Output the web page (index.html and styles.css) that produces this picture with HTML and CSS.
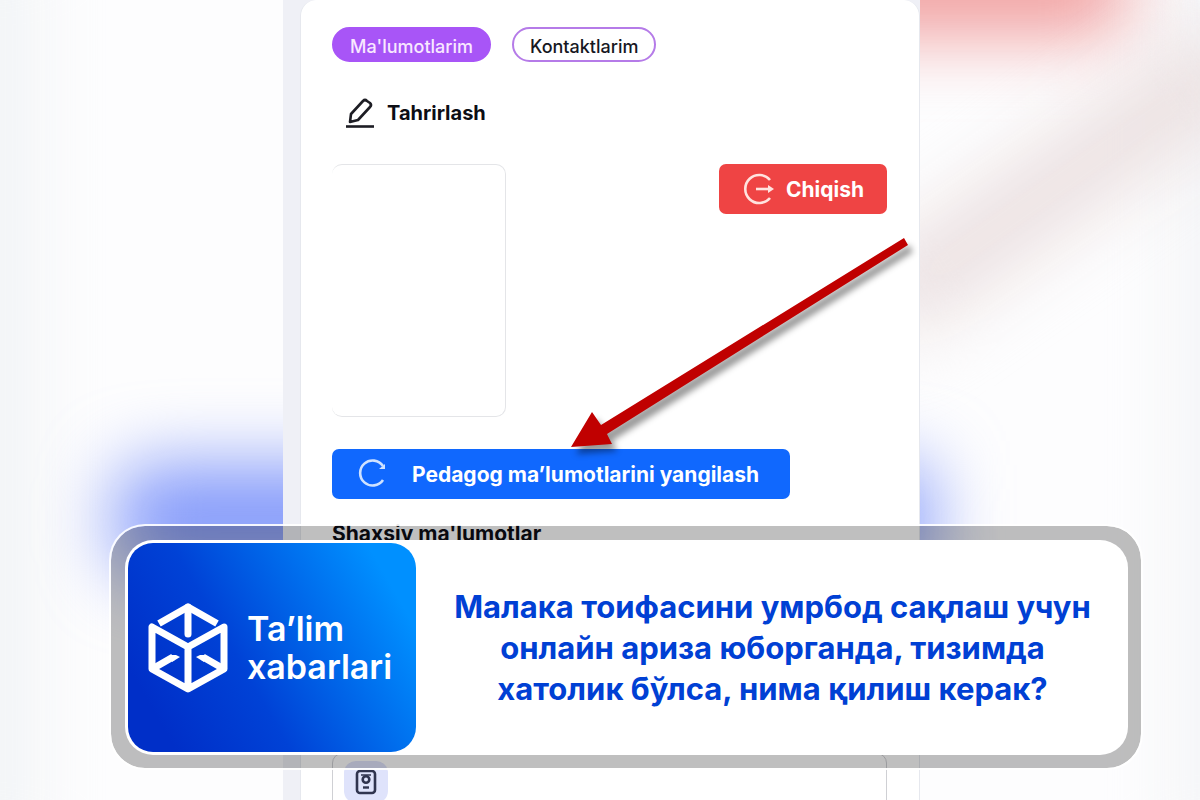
FILE: index.html
```html
<!DOCTYPE html>
<html lang="uz">
<head>
  <meta charset="UTF-8">
  <meta name="viewport" content="width=device-width, initial-scale=1.0">
  <title>Ta’lim xabarlari</title>
  <link rel="stylesheet" href="styles.css">
</head>
<body>
  <div class="page">
    <div class="backdrop">
      <div class="blob blob-edge"></div>
      <div class="blob blob-edge-right"></div>
      <div class="blob blob-blue"></div>
      <div class="blob blob-blue-right"></div>
      <div class="blob blob-red"></div>
      <div class="blob blob-streak"></div>
    </div>

    <main class="screen">
      <div class="profile">
        <div class="tabs">
          <button class="tab tab-active">Ma'lumotlarim</button>
          <button class="tab">Kontaktlarim</button>
        </div>

        <button class="edit-button">
          <svg width="30" height="32" viewBox="0 0 30 32" fill="none" stroke="#1d1d24" stroke-width="2.6" stroke-linejoin="round">
            <path d="M5 25l1-8L18 4q2-2 4 0l3 2q2 2 0 4L13 23z"/>
            <path d="M1 29.500h28"/>
          </svg>
          Tahrirlash
        </button>

        <div class="profile-row">
          <div class="photo"></div>
          <button class="button button-red">
            <svg width="32" height="32" viewBox="0 0 32 32" fill="none" stroke="#ffe3df" stroke-width="2.600">
              <path d="M28 7A14 14 0 1 0 28 25"/>
              <path d="M14 16h15"/>
              <path d="M26 12l6 4-6 4z" fill="#ffe3df" stroke="none"/>
            </svg>
            Chiqish
          </button>
        </div>

        <button class="button button-blue">
          <svg width="28" height="30" viewBox="0 0 28 30" fill="none" stroke="#cfe2ff" stroke-width="2.600">
            <path d="M25 7A12.500 12.500 0 1 0 25 21"/>
            <path d="M27 5v5h-6z" fill="#cfe2ff" stroke="none"/>
          </svg>
          Pedagog ma’lumotlarini yangilash
        </button>

        <h2 class="section-title">Shaxsiy ma'lumotlar</h2>

        <div class="details">
          <div class="details-icon">
            <svg width="22" height="26" viewBox="0 0 22 26" fill="none" stroke="#30344f" stroke-width="2.600">
              <rect x="2" y="2" width="18" height="22" rx="3"/>
              <circle cx="11" cy="10.500" r="3.300"/>
              <path d="M6 6h10" stroke-width="1.500"/>
              <path d="M8 18.500h6" stroke-width="2.400"/>
            </svg>
          </div>
        </div>
      </div>

      <svg class="pointer" width="360" height="230" viewBox="0 0 360 230">
        <path d="M340 3L344 10 43 199 48 209 7 212 28 177 37 190z" fill="#c00000"/>
      </svg>
    </main>

    <section class="banner">
      <div class="banner-card">
        <div class="brand">
          <svg width="80" height="90" viewBox="0 0 80 90" fill="none" stroke="#fff" stroke-width="7" stroke-linejoin="round">
            <path d="M11 20.500L40 4l29 16.500"/>
            <path d="M40 4v27" stroke-linecap="round"/>
            <path d="M40 44L4 24V66l36 20 36-20V24L40 44v42"/>
            <path d="M5 65.500L25 54M75 65.500L55 54"/>
            <path d="M22 52h6l4 2-8 5zM58 52h-6l-4 2 8 5z" fill="#fff" stroke="none"/>
          </svg>
          <div class="brand-name">Ta’lim<br>xabarlari</div>
        </div>
        <h1 class="headline">Малака тоифасини умрбод сақлаш учун онлайн ариза юборганда, тизимда хатолик бўлса, нима қилиш керак?</h1>
      </div>
    </section>
  </div>
</body>
</html>
```
FILE: styles.css
```css
* {
    box-sizing: border-box;
}

body {
    margin: 0;
    font-family: Inter, "Liberation Sans", sans-serif;
    color: #0c0d14;
    background-color: #fdfdfe;
}

button {
    font-family: inherit;
    cursor: pointer;
}

svg {
    flex-shrink: 0;
}

.page {
    position: relative;
    height: 100vh;
    padding-left: 3px;
    overflow: hidden;
}

/* soft colours behind everything */
.backdrop {
    position: absolute;
    inset: 0;
    overflow: hidden;
}

.blob {
    position: absolute;
    filter: blur(36px);
}

.blob-edge {
    left: -60px;
    top: -60px;
    bottom: -60px;
    width: 90px;
    background-color: #f0f3f5;
}

.blob-edge-right {
    right: -60px;
    top: -60px;
    bottom: -60px;
    width: 80px;
    background-color: #f3f4f6;
}

.blob-blue {
    left: 115px;
    top: 465px;
    width: 300px;
    height: 110px;
    border-radius: 30px;
    background-color: #8399fa;
}

.blob-blue-right {
    right: 270px;
    top: 465px;
    width: 120px;
    height: 110px;
    background-color: #8399fa;
}

.blob-red {
    right: 75px;
    top: -60px;
    width: 300px;
    height: 95px;
    background-color: #f09c9c;
}

.blob-streak {
    right: -80px;
    top: 140px;
    width: 440px;
    height: 85px;
    background-color: #ebe0e0;
    transform: rotate(-35deg);
}

.screen {
    position: relative;
    max-width: 637px;
    height: 100%;
    margin: 0 auto;
    padding-left: 17px;
    background-color: #eff0f6;
}

.profile {
    height: 100%;
    padding: 27px 32px 0 31px;
    border: 1px solid #e6e8ee;
    border-width: 0 1px;
    border-radius: 16px 16px 0 0;
    background-color: #fff;
}

.tabs {
    display: flex;
    gap: 21px;
}

.tab {
    height: 35px;
    padding: 3px 16px 0;
    border: 2px solid #b57be8;
    border-radius: 18px;
    font-size: 18px;
    font-weight: 500;
    color: #17181f;
    background-color: #fff;
}

.tab-active {
    border-color: #a855f7;
    color: #f8e8ff;
    background-color: #a855f7;
}

.edit-button {
    display: flex;
    align-items: center;
    gap: 12px;
    height: 32px;
    margin: 35px 0 35px 13px;
    padding: 0;
    border: none;
    font-size: 20px;
    font-weight: 700;
    color: #0c0d14;
    background: none;
}

.profile-row {
    display: flex;
    justify-content: space-between;
    align-items: flex-start;
}

.photo {
    width: 174px;
    height: 253px;
    border: 1px solid #e4e5e8;
    border-left: none;
    border-radius: 10px;
}

.button {
    display: flex;
    align-items: center;
    height: 50px;
    border: none;
    border-radius: 7px;
    font-size: 21px;
    font-weight: 700;
    color: #fff;
}

.button-red {
    gap: 12px;
    padding: 0 23px;
    background-color: #ef4444;
}

.button-blue {
    gap: 26px;
    margin-top: 32px;
    padding: 0 31px 0 26px;
    background-color: #1068fe;
}

.section-title {
    margin: 22px 0;
    font-size: 21px;
    line-height: 26px;
    font-weight: 700;
}

.details {
    height: 120px;
    margin-top: 206px;
    padding: 7px 11px;
    border: 1px solid #cfd0d4;
    border-radius: 10px;
}

.details-icon {
    display: flex;
    align-items: center;
    justify-content: center;
    width: 44px;
    height: 42px;
    border-radius: 12px;
    background-color: #dfe3fb;
}

.pointer {
    position: absolute;
    left: 281px;
    top: 235px;
    filter: drop-shadow(5px 7px 3px rgba(0, 0, 0, 0.4));
}

/* news banner over the screen */
.banner {
    position: absolute;
    left: 109px;
    right: 57px;
    bottom: 30px;
    padding: 14px 13px 13px 14px;
    border: 2px solid rgba(255, 255, 255, 0.9);
    border-radius: 36px;
    background-color: rgba(0, 0, 0, 0.25);
    background-clip: padding-box;
}

.banner-card {
    display: flex;
    padding: 3px;
    border-radius: 28px;
    background-color: #fff;
}

.brand {
    display: flex;
    align-items: center;
    flex-shrink: 0;
    gap: 19px;
    width: 288px;
    height: 209px;
    padding-left: 20px;
    border-radius: 25px;
    background: linear-gradient(60deg, #002fc8 12%, #0042d6 40%, #0090ff 88%);
}

.brand-name {
    color: #fff;
    font-size: 34px;
    line-height: 38px;
    font-weight: 600;
}

.headline {
    flex: 1;
    align-self: center;
    margin: 0;
    padding: 0 28px 0 32px;
    color: #0040d4;
    font-size: 31px;
    line-height: 41px;
    font-weight: 700;
    text-align: center;
}
```
